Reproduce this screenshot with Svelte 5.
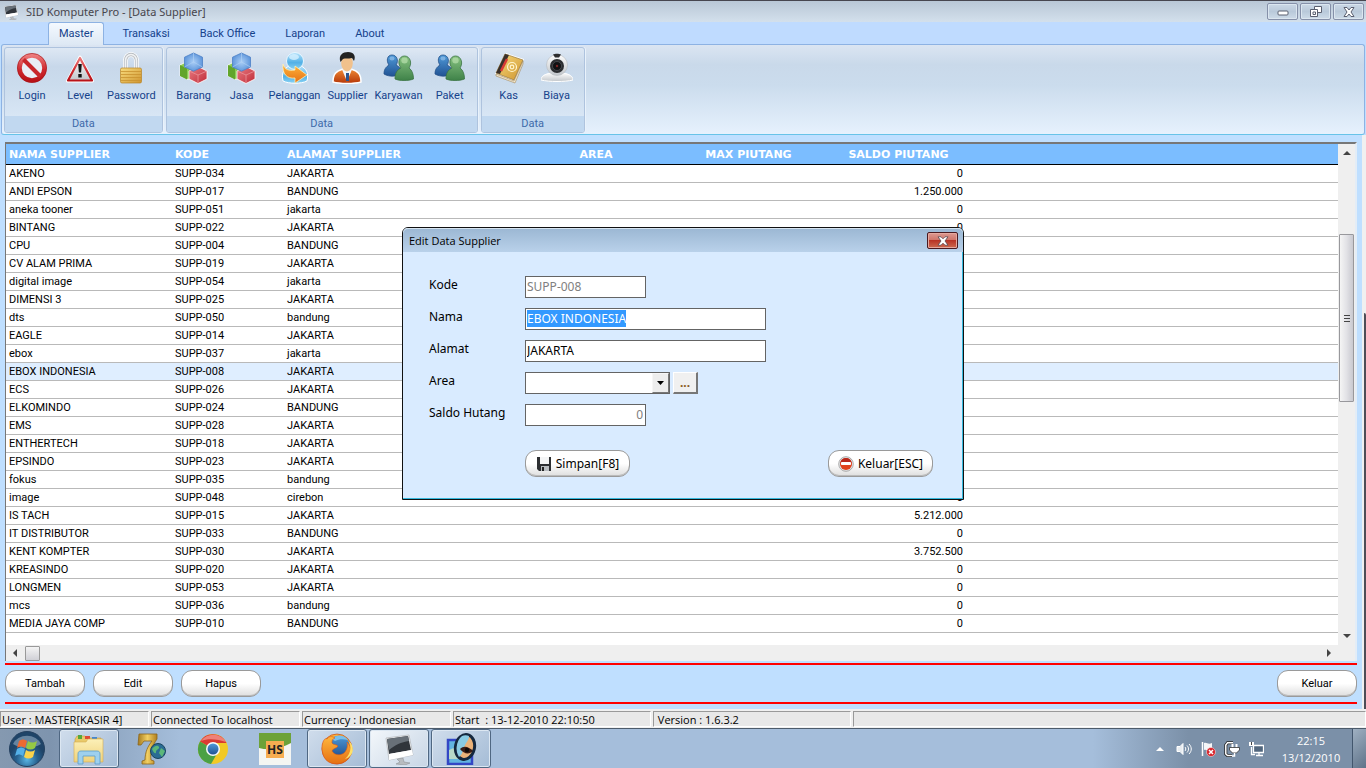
<script lang="ts">
  import { onMount } from "svelte";

  interface Supplier {
    name: string;
    code: string;
    address: string;
    balance: string;
  }

  const tabs = ["Master", "Transaksi", "Back Office", "Laporan", "About"];

  const groups = [
    [
      { label: "Login", icon: "login" },
      { label: "Level", icon: "level" },
      { label: "Password", icon: "lock" },
    ],
    [
      { label: "Barang", icon: "cubes" },
      { label: "Jasa", icon: "cubes" },
      { label: "Pelanggan", icon: "customer" },
      { label: "Supplier", icon: "supplier" },
      { label: "Karyawan", icon: "people" },
      { label: "Paket", icon: "people" },
    ],
    [
      { label: "Kas", icon: "book" },
      { label: "Biaya", icon: "camera" },
    ],
  ];

  const rows: [string, string, string, string][] = [
    ["AKENO", "034", "JAKARTA", "0"],
    ["ANDI EPSON", "017", "BANDUNG", "1.250.000"],
    ["aneka tooner", "051", "jakarta", "0"],
    ["BINTANG", "022", "JAKARTA", "0"],
    ["CPU", "004", "BANDUNG", "0"],
    ["CV ALAM PRIMA", "019", "JAKARTA", "0"],
    ["digital image", "054", "jakarta", "0"],
    ["DIMENSI 3", "025", "JAKARTA", "0"],
    ["dts", "050", "bandung", "0"],
    ["EAGLE", "014", "JAKARTA", "0"],
    ["ebox", "037", "jakarta", "0"],
    ["EBOX INDONESIA", "008", "JAKARTA", "0"],
    ["ECS", "026", "JAKARTA", "0"],
    ["ELKOMINDO", "024", "BANDUNG", "0"],
    ["EMS", "028", "JAKARTA", "0"],
    ["ENTHERTECH", "018", "JAKARTA", "0"],
    ["EPSINDO", "023", "JAKARTA", "0"],
    ["fokus", "035", "bandung", "0"],
    ["image", "048", "cirebon", "0"],
    ["IS TACH", "015", "JAKARTA", "5.212.000"],
    ["IT DISTRIBUTOR", "033", "BANDUNG", "0"],
    ["KENT KOMPTER", "030", "JAKARTA", "3.752.500"],
    ["KREASINDO", "020", "JAKARTA", "0"],
    ["LONGMEN", "053", "JAKARTA", "0"],
    ["mcs", "036", "bandung", "0"],
    ["MEDIA JAYA COMP", "010", "BANDUNG", "0"],
  ];

  const suppliers: Supplier[] = rows.map(([name, no, address, balance]) => ({
    name,
    code: "SUPP-" + no,
    address,
    balance,
  }));

  const tasks = [
    { name: "Explorer", icon: "explorer", open: true },
    { name: "Seven", icon: "seven", open: false },
    { name: "Chrome", icon: "chrome", open: false },
    { name: "HS", icon: "hs", open: false },
    { name: "Firefox", icon: "firefox", open: true },
    { name: "SID Komputer Pro", icon: "monitor", open: true, active: true },
    { name: "Viewer", icon: "viewer", open: true },
  ];

  let activeTab = $state("Master");
  let selected = $state("SUPP-008");
  let dialogOpen = $state(true);
  let kode = $state("SUPP-008");
  let nama = $state("EBOX INDONESIA");
  let alamat = $state("JAKARTA");
  let saldo = $state("0");
  let namaInput: HTMLInputElement | undefined = $state();

  function edit(): void {
    const s = suppliers.find((x) => x.code === selected);
    if (!s) return;
    kode = s.code;
    nama = s.name;
    alamat = s.address;
    saldo = s.balance;
    dialogOpen = true;
  }

  onMount(() => {
    namaInput?.focus();
    namaInput?.select();
  });
</script>

{#snippet monitor(size: number)}
  <svg width={size} height={size} viewBox="0 0 32 32">
    <path d="M14 26l6-1 1 4 6 1-5 2-9-1 4-2z" fill="#b9bcc0" stroke="#85888c" stroke-width=".5" />
    <path d="M3 5l23-3 4 20-24 5z" fill="#f4f5f6" stroke="#a5a8ab" stroke-width=".6" />
    <path d="M4 6l21-3 3 14-22 4z" fill="#30353b" />
    <path d="M4 6l21-3 1 5c-8 1-14 4-20 9z" fill="#687078" />
    <path d="M6 21l23-4 1 5-24 5z" fill="#fff" />
  </svg>
{/snippet}

{#snippet icon(name: string)}
  <svg class="icon" width="32" height="32" viewBox="0 0 32 32" aria-hidden="true">
    {#if name === "login"}
      <circle cx="16" cy="16" r="12.5" fill="#e9eef6" stroke="url(#gRed)" stroke-width="4.6" />
      <path d="M7.5 7.5l17 17" stroke="#c8262b" stroke-width="4" />
      <circle cx="16" cy="16" r="14.6" fill="none" stroke="#9e1519" stroke-width=".6" />
    {:else if name === "level"}
      <path d="M16 5L28.500 29H3.500z" fill="#fff" stroke="#fff" stroke-width="3" stroke-linejoin="round" />
      <path d="M16 6L28 28.500H4z" fill="url(#gSilver)" stroke="url(#gRed)" stroke-width="2.200" stroke-linejoin="round" />
      <path d="M14.200 12h3.600l-.7 8.500h-2.200z" fill="#111" />
      <rect x="14.300" y="22" width="3.400" height="3.500" fill="#111" />
    {:else if name === "lock"}
      <path d="M10.500 17V8.500a5.500 6 0 0 1 11 0V17" fill="none" stroke="#fff" stroke-width="5" />
      <path d="M10.500 17V8.500a5.500 6 0 0 1 11 0V17" fill="none" stroke="#b9bec3" stroke-width="3.400" />
      <path d="M10.500 17V8.500a5.500 6 0 0 1 11 0V17" fill="none" stroke="#f1f2f3" stroke-width="1.600" />
      <rect x="5.500" y="16" width="21" height="15" rx="1.500" fill="url(#gGold)" stroke="#b98422" stroke-width=".7" />
      <path d="M6 19.500h20M6 22.500h20M6 25.500h20M6 28.500h20" stroke="#c9922e" stroke-width=".8" />
    {:else if name === "cubes"}
      <path d="M2 13l7-3.500 8 4V24l-7 3.500L2 24z" fill="#8ecb53" stroke="#fff" stroke-width=".8" />
      <path d="M2 13l7 3.500v11L2 24z" fill="#62a52b" />
      <path d="M11 19l9-4.500 9 4.500v8l-9 4.500-9-4.500z" fill="url(#gRed2)" stroke="#fff" stroke-width=".8" />
      <path d="M11 19l9 4 9-4M20 23v8" stroke="#ee9ba0" stroke-width=".7" fill="none" />
      <path d="M15.500 1l9 4.200v9.800l-9 4.200-9-4.200V5.200z" fill="url(#gCube)" stroke="#4d80c6" stroke-width=".8" />
      <path d="M6.500 15l9-5 9 5M15.500 10V1" stroke="#b4d4f5" stroke-width=".6" fill="none" />
    {:else if name === "customer"}
      <path d="M4 29c-2-9 2-13 6-15h12c5 2 8 7 6 15-6 3-18 3-24 0z" fill="url(#gSky)" stroke="#fff" />
      <circle cx="16" cy="9" r="8.500" fill="url(#gSky)" stroke="#e8f6ff" />
      <ellipse cx="15" cy="5" rx="5" ry="3" fill="#d6f0ff" opacity=".8" />
      <path d="M4 12c2 6 6 7 12 6v-4l12 9-12 8v-5c-8 1-13-4-12-14z" fill="url(#gOrange)" stroke="#fff0b5" stroke-width=".8" />
    {:else if name === "supplier"}
      <path d="M2 30c0-8 3-11 10-13h8c7 2 10 5 10 13-7 2-21 2-28 0z" fill="url(#gShirt)" stroke="#fff" stroke-width="1.500" />
      <path d="M11 17.500l5 12 5-12-2-2h-6z" fill="#f3f7fb" />
      <path d="M15 21h3v8h-3z" fill="#2b5590" />
      <ellipse cx="16" cy="11" rx="5.800" ry="8.500" fill="#f1c18c" />
      <path d="M9.500 10C7 3 12 0 17 0c6 0 8 4 6 9l-2-3c-4 1-7 0-9 1z" fill="#222" />
    {:else if name === "people"}
      <path d="M1 22c0-5 2-7 5-9C3 9 4 3 9 3s7 6 4 10c4 2 5 4 5 8-4 4-12 4-17 1z" fill="url(#gBlue)" stroke="#234f88" stroke-width=".8" />
      <path d="M12 27c0-6 2-9 6-11-4-5-2-12 3.500-12s8 7 4.500 12c3 2 4.500 6 4.500 11-5 2-14 2-18.500 0z" fill="url(#gGreen)" stroke="#3a7443" stroke-width=".8" />
      <ellipse cx="21.500" cy="8.500" rx="3.200" ry="3" fill="#b8dfae" opacity=".7" />
      <ellipse cx="9" cy="6.500" rx="2.500" ry="2" fill="#a1c8ee" opacity=".6" />
    {:else if name === "book"}
      <path d="M13 1l18 6-9 24L2 22z" fill="#fff" />
      <path d="M12 2l18 6-9 20-18-7z" fill="url(#gGold)" stroke="#8a6a2e" stroke-width=".6" />
      <path d="M12 2l4 1-9 19-4-1z" fill="#39302b" />
      <path d="M14 7l-6 12" stroke="#d83a35" stroke-width="2.500" />
      <path d="M3 22l18 7 9-20v3l-8 19-19-7z" fill="#f3e8cf" stroke="#937443" stroke-width=".5" />
      <circle cx="19" cy="15" r="4.500" fill="none" stroke="#fff4cc" stroke-width="1.200" />
      <circle cx="19" cy="15" r="1.800" fill="none" stroke="#fff4cc" stroke-width="1.200" />
    {:else if name === "camera"}
      <path d="M0 28c0-4 4-6 10-7h12c6 1 10 3 10 7-8 2-24 2-32 0z" fill="url(#gSilver)" stroke="#fff" />
      <circle cx="16" cy="13" r="10.500" fill="url(#gSilver)" stroke="#b5babf" stroke-width=".6" />
      <path d="M12 2.500c2-1 6-1 8 0l-2 3h-4z" fill="#2d2d2f" />
      <circle cx="16" cy="14" r="7" fill="#2b2d30" />
      <circle cx="16" cy="14" r="4.500" fill="#101113" stroke="#55585c" stroke-width=".7" />
      <circle cx="16" cy="14" r="1.200" fill="#7a2323" />
    {:else if name === "explorer"}
      <path d="M2 6l2-3h8l2 2h14v8H2z" fill="#e9c969" stroke="#b8923b" stroke-width=".5" />
      <path d="M5 2h4v4H5z" fill="#56a83b" />
      <path d="M12 3h5v3h-5z" fill="#de4b36" />
      <path d="M19 4h5v3h-5z" fill="#4386cf" />
      <path d="M1 9h12l2-3h15v23H1z" fill="url(#gFolder)" stroke="#d3ab53" stroke-width=".6" />
      <path d="M5 31V21c0-2 1-3 3-3h16c2 0 3 1 3 3v10h-5v-8H10v8z" fill="#9ed0ee" stroke="#5b9cc8" stroke-width=".8" />
    {:else if name === "seven"}
      <path d="M4 1h18v5c-5 7-7 14-6 21l3 1v3H7v-3l3-1c0-8 3-14 7-19H9l-3 4H3z" fill="url(#gBrass)" stroke="#8d661a" stroke-width=".8" />
      <circle cx="23" cy="18" r="7.500" fill="#2a6c94" stroke="#19445f" />
      <path d="M17 16c3-4 6-4 7-2s-3 2-3 5-3 0-4-3zm9-1l4 3-3 6-3-4z" fill="#5cb779" />
    {:else if name === "chrome"}
      <circle cx="16" cy="16" r="15" fill="#f2c925" />
      <path d="M16 16L3 8.500A15 15 0 0 1 29.500 10H16z" fill="#d93b32" />
      <path d="M16 16L3 8.500A15 15 0 0 0 14 31l7-12z" fill="#4ba144" />
      <path d="M4 8a15 15 0 0 1 25 1c-8-3-18-4-25-1z" fill="#ef8177" />
      <circle cx="16" cy="16" r="7" fill="#f7fafc" />
      <circle cx="16" cy="16" r="5.500" fill="url(#gBlue)" />
    {:else if name === "hs"}
      <path d="M0 0h32v16H0z" fill="#6da238" />
      <path d="M0 15c11 3 23 0 32-5v22H0z" fill="#f4f5f2" />
      <rect x="7" y="8" width="18" height="17" fill="#f7ad51" />
      <text x="16" y="21" text-anchor="middle" class="hs">HS</text>
    {:else if name === "firefox"}
      <circle cx="16" cy="16" r="15" fill="url(#gOrange)" stroke="#c34816" stroke-width=".7" />
      <circle cx="18" cy="13" r="10.500" fill="url(#gBlue)" />
      <path d="M11 6c4-5 13-4 16 1-5-1-9-1-13 1z" fill="#79c0ec" />
      <path d="M2 9c1-3 3-4 4-3 2-3 5-3 8-1-3 1-3 3-3 5 1 2 4 1 6 3-2 3-5 2-6 5 2 4 8 5 12 2 3-3 4-7 3-11 5 5 5 13 0 18-7 6-19 5-23-3-2-5-3-10-1-15z" fill="url(#gOrange)" stroke="#d7581a" stroke-width=".6" />
      <path d="M28 8c3 7 1 14-4 18 9-3 10-12 4-18z" fill="#ffe26a" />
    {:else if name === "viewer"}
      <rect x="3" y="7" width="24" height="24" fill="#62b5e1" stroke="#3347c5" stroke-width="2.500" />
      <path d="M4 17l7-3 4 5 10-4v11H4z" fill="#b7d9c8" />
      <ellipse cx="20" cy="14" rx="9.500" ry="12.500" fill="#eab279" stroke="#14283f" stroke-width="3" transform="rotate(12 20 14)" />
      <path d="M17 3c-6 5-7 15-3 21 4-3 4-8 6-12s4-5 4-9c-2-1-5-1-7 0z" fill="#89cbe4" />
      <path d="M15 16c4-4 9-2 13 2-4 4-9 3-13-2z" fill="#3a1d16" />
      <circle cx="22" cy="17" r="2.200" fill="#0e0b0b" />
    {/if}
  </svg>
{/snippet}

<svg class="defs" width="0" height="0" aria-hidden="true">
  <defs>
    <linearGradient id="gRed" x2="0" y2="1"><stop stop-color="#ec7a7b" /><stop offset=".55" stop-color="#cf2a2f" /><stop offset="1" stop-color="#ba1218" /></linearGradient>
    <linearGradient id="gRed2" x2="1" y2="1"><stop stop-color="#ea7d83" /><stop offset="1" stop-color="#bf2b38" /></linearGradient>
    <linearGradient id="gSilver" x2="0" y2="1"><stop stop-color="#fdfdfd" /><stop offset="1" stop-color="#c2c6ca" /></linearGradient>
    <linearGradient id="gGold" x2="1" y2="1"><stop stop-color="#f8dc7e" /><stop offset="1" stop-color="#cf9530" /></linearGradient>
    <linearGradient id="gBrass" x2="1" y2="0"><stop stop-color="#a57a1e" /><stop offset=".5" stop-color="#f2cf62" /><stop offset="1" stop-color="#b1801f" /></linearGradient>
    <radialGradient id="gCube"><stop stop-color="#a9cdf5" /><stop offset="1" stop-color="#6198dc" /></radialGradient>
    <linearGradient id="gSky" x2="0" y2="1"><stop stop-color="#b7e3fb" /><stop offset=".6" stop-color="#52b0e6" /><stop offset="1" stop-color="#8bd3f4" /></linearGradient>
    <linearGradient id="gOrange" x2="0" y2="1"><stop stop-color="#ffb63c" /><stop offset="1" stop-color="#e57013" /></linearGradient>
    <linearGradient id="gShirt" x2="0" y2="1"><stop stop-color="#ef8a35" /><stop offset="1" stop-color="#b53608" /></linearGradient>
    <linearGradient id="gBlue" x2="0" y2="1"><stop stop-color="#4f9ad8" /><stop offset="1" stop-color="#215394" /></linearGradient>
    <linearGradient id="gGreen" x2="0" y2="1"><stop stop-color="#86c180" /><stop offset="1" stop-color="#3f8249" /></linearGradient>
    <linearGradient id="gFolder" x2="0" y2="1"><stop stop-color="#fbf0b8" /><stop offset="1" stop-color="#f0d27b" /></linearGradient>
    <radialGradient id="gOrb" cy=".8"><stop stop-color="#58b5e4" /><stop offset=".6" stop-color="#27618f" /><stop offset="1" stop-color="#1f4468" /></radialGradient>
  </defs>
</svg>

<div class="window">
  <header class="titlebar">
    {@render monitor(16)}
    <h1>SID Komputer Pro - [Data Supplier]</h1>
    <div class="win-buttons">
      <button aria-label="Minimize">
        <svg width="16" height="12" viewBox="0 0 16 12"><rect x="3" y="5" width="10" height="4" rx="1" fill="#fff" stroke="#5b6070" /></svg>
      </button>
      <button aria-label="Restore">
        <svg width="16" height="12" viewBox="0 0 16 12" fill="#fff" stroke="#5b6070">
          <path d="M6.500 .5h7v6h-7z" />
          <path d="M2.500 3.500h7v7h-7z" />
          <path d="M5 6h2.500v2.500H5z" />
        </svg>
      </button>
      <button aria-label="Close">
        <svg width="16" height="12" viewBox="0 0 16 12"><path d="M3 1.500h3l2 2.500 2-2.500h3L10 6l3 4.500h-3L8 8l-2 2.500H3L6 6z" fill="#fff" stroke="#5b6070" /></svg>
      </button>
    </div>
  </header>

  <nav class="tabs">
    {#each tabs as tab}
      <button class:active={tab === activeTab} onclick={() => (activeTab = tab)}>{tab}</button>
    {/each}
  </nav>

  <div class="ribbon">
    {#each groups as items}
      <section class="group">
        <div class="items">
          {#each items as item}
            <button>
              {@render icon(item.icon)}
              <span>{item.label}</span>
            </button>
          {/each}
        </div>
        <div class="caption">Data</div>
      </section>
    {/each}
  </div>

  <div class="client">
    <main>
      <div class="grid">
        <div class="grid-body">
          <table>
            <colgroup>
              <col class="c-name" /><col class="c-code" /><col class="c-address" />
              <col class="c-area" /><col class="c-max" /><col class="c-saldo" /><col />
            </colgroup>
            <thead>
              <tr>
                <th>NAMA SUPPLIER</th>
                <th>KODE</th>
                <th>ALAMAT SUPPLIER</th>
                <th class="center">AREA</th>
                <th class="center">MAX PIUTANG</th>
                <th class="center">SALDO PIUTANG</th>
                <th></th>
              </tr>
            </thead>
            <tbody>
              {#each suppliers as s}
                <tr class:selected={s.code === selected} onclick={() => (selected = s.code)}>
                  <td>{s.name}</td>
                  <td>{s.code}</td>
                  <td>{s.address}</td>
                  <td></td>
                  <td></td>
                  <td class="num">{s.balance}</td>
                  <td></td>
                </tr>
              {/each}
            </tbody>
          </table>
        </div>
        <div class="vscroll">
          <button aria-label="Scroll up"><svg width="8" height="4" viewBox="0 0 8 4"><path d="M4 0l4 4H0z" fill="#444" /></svg></button>
          <div class="vtrack">
            <div class="vthumb"><i></i><i></i><i></i></div>
          </div>
          <button aria-label="Scroll down"><svg width="8" height="4" viewBox="0 0 8 4"><path d="M0 0h8L4 4z" fill="#444" /></svg></button>
        </div>
        <div class="hscroll">
          <button aria-label="Scroll left"><svg width="4" height="8" viewBox="0 0 4 8"><path d="M4 0v8L0 4z" fill="#444" /></svg></button>
          <div class="hthumb"></div>
          <button class="end" aria-label="Scroll right"><svg width="4" height="8" viewBox="0 0 4 8"><path d="M0 0l4 4-4 4z" fill="#444" /></svg></button>
        </div>
        <div class="corner"></div>
      </div>

      <div class="actions">
        <button class="pill">Tambah</button>
        <button class="pill" onclick={edit}>Edit</button>
        <button class="pill">Hapus</button>
        <button class="pill last">Keluar</button>
      </div>
    </main>
    <div class="edge"><div></div></div>
  </div>

  <footer class="status">
    <span class="s-user">User : MASTER[KASIR 4]</span>
    <span class="s-user">Connected To localhost</span>
    <span class="s-user">Currency : Indonesian</span>
    <span class="s-wide">Start &nbsp;: 13-12-2010 22:10:50</span>
    <span class="s-wide">&nbsp;Version : 1.6.3.2</span>
    <span class="s-rest"></span>
  </footer>

  <div class="taskbar">
    <button class="start" aria-label="Start">
      <svg width="38" height="38" viewBox="0 0 38 38">
        <circle cx="19" cy="19" r="17.500" fill="url(#gOrb)" stroke="#24405f" />
        <path d="M5 14a15 13 0 0 1 28 0c-8 5-20 5-28 0z" fill="#bcd3e4" opacity=".45" />
        <path d="M11 11c3-2 5-2 8 0l-2 7c-3-2-5-2-8 0z" fill="#ec6a32" />
        <path d="M20 11c3 2 6 2 9 0l-2 7c-3 2-6 2-9 0z" fill="#95c944" />
        <path d="M9 19c3-2 5-2 8 0l-2 7c-3-2-5-2-8 0z" fill="#55b1e8" />
        <path d="M18 20c3 2 6 2 9 0l-2 7c-3 2-6 2-9 0z" fill="#fbd34b" />
      </svg>
    </button>
    {#each tasks as task}
      <button class="task" class:open={task.open} class:current={task.active} aria-label={task.name}>
        {#if task.icon === "monitor"}
          {@render monitor(32)}
        {:else}
          {@render icon(task.icon)}
        {/if}
      </button>
    {/each}

    <div class="tray">
      <svg class="chevron" width="8" height="4" viewBox="0 0 8 4"><path d="M4 0l4 4H0z" fill="#fff" /></svg>
      <svg width="16" height="16" viewBox="0 0 16 16" fill="none" stroke="#fff">
        <path d="M1 5.500h3l3-3v11l-3-3H1z" fill="#e8ecf0" />
        <path d="M9 6c1 1 1 3 0 4M11 4.500c2 2 2 5 0 7M13 3c3 3 3 7 0 10" />
      </svg>
      <svg width="16" height="16" viewBox="0 0 16 16">
        <path d="M2.500 1v14" stroke="#fff" stroke-width="1.500" />
        <path d="M4 2c3-1 4 2 8 0v7c-4 2-5-1-8 0z" fill="#f5f6f8" />
        <circle cx="11" cy="11" r="4.500" fill="#d8232a" stroke="#fff" stroke-width=".5" />
        <path d="M9 9l4 4m0-4l-4 4" stroke="#fff" stroke-width="1.500" />
      </svg>
      <svg width="16" height="16" viewBox="0 0 16 16" fill="none" stroke="#fff" stroke-width="1.500">
        <path d="M9 1.800H3.500L1.800 4v9l1.700 1.500H8" stroke="#222" stroke-width="3" />
        <path d="M9 1.800H3.500L1.800 4v9l1.700 1.500H8" />
        <path d="M8.500 3v4m4-4v4" stroke-width="2" />
        <path d="M5.500 6.500h10V9l-3 3h-4l-3-3z" fill="#fff" stroke="#333" stroke-width=".8" />
        <path d="M10.500 12v3H8" />
      </svg>
      <svg width="16" height="16" viewBox="0 0 16 16">
        <path d="M5.500 4.500h10v7h-10z" fill="#52677e" stroke="#fff" stroke-width="1.300" />
        <path d="M8 14.500h7M11 12v2M3.500 6v7.500H7" stroke="#fff" stroke-width="1.300" fill="none" />
        <path d="M1 1h5v4H1z" fill="#fff" />
        <path d="M3.500 1v3" stroke="#444" />
      </svg>
    </div>
    <div class="clock"><span>22:15</span><span>13/12/2010</span></div>
    <button class="show-desktop" aria-label="Show desktop"></button>
  </div>

  {#if dialogOpen}
    <div class="dialog" role="dialog" aria-labelledby="dialog-title">
      <div class="dialog-title">
        <h2 id="dialog-title">Edit Data Supplier</h2>
        <button aria-label="Close" onclick={() => (dialogOpen = false)}>
          <svg width="14" height="10" viewBox="0 0 14 10"><path d="M2 .8h3l2 2 2-2h3L9 5l3 4.200H9l-2-2-2 2H2L5 5z" fill="#fff" stroke="#59464e" stroke-width=".8" /></svg>
        </button>
      </div>
      <form onsubmit={(e) => e.preventDefault()}>
        <label for="kode">Kode</label>
        <div><input id="kode" class="short" bind:value={kode} disabled /></div>
        <label for="nama">Nama</label>
        <div><input id="nama" bind:value={nama} bind:this={namaInput} spellcheck="false" autocomplete="off" /></div>
        <label for="alamat">Alamat</label>
        <div><input id="alamat" bind:value={alamat} spellcheck="false" autocomplete="off" /></div>
        <label for="area">Area</label>
        <div class="area">
          <div class="combo">
            <select id="area"><option></option></select>
            <span class="arrow"><svg width="7" height="4" viewBox="0 0 7 4"><path d="M0 0h7L3.500 4z" /></svg></span>
          </div>
          <button class="more" type="button">...</button>
        </div>
        <label for="saldo">Saldo Hutang</label>
        <div><input id="saldo" class="short right" bind:value={saldo} disabled /></div>
        <div class="form-buttons">
          <button class="pill" type="submit">
            <svg width="16" height="16" viewBox="0 0 16 16">
              <path d="M1 1h14v14H3l-2-2z" fill="#2c2e31" />
              <path d="M4 1h9v7H4z" fill="#f4f5f6" />
              <path d="M5 10h8v5H5z" fill="#b8bcc0" />
              <path d="M6 11h2v4H6z" fill="#222" />
            </svg>
            Simpan[F8]
          </button>
          <button class="pill" type="button" onclick={() => (dialogOpen = false)}>
            <svg width="16" height="16" viewBox="0 0 16 16">
              <circle cx="8" cy="8" r="7.300" fill="#e6e7e8" stroke="#999" stroke-width=".8" />
              <circle cx="8" cy="8" r="6" fill="#e0421c" />
              <path d="M2.500 7a5.500 5 0 0 1 11 0z" fill="#b8281c" />
              <rect x="3" y="6" width="10" height="3" rx=".8" fill="#fff" />
            </svg>
            Keluar[ESC]
          </button>
        </div>
      </form>
    </div>
  {/if}
</div>

<style>
  :global(body) {
    margin: 0;
    background: #bfdfff;
  }

  .window {
    position: relative;
    min-height: 100vh;
    display: flex;
    flex-direction: column;
    font: 11px/14px Roboto, "Liberation Sans", sans-serif;
    color: #000;
  }

  .defs {
    position: absolute;
  }

  svg {
    display: block;
    flex: none;
  }

  button {
    font: inherit;
    color: inherit;
    margin: 0;
    padding: 0;
    border: 0;
    background: none;
  }

  .titlebar {
    display: flex;
    align-items: center;
    height: 22px;
    box-sizing: border-box;
    padding-left: 3px;
    gap: 7px;
    border-top: 1px solid #47464f;
    background: linear-gradient(#b9c7d6, #d3e0ec);
  }

  h1,
  h2 {
    margin: 0;
    font: 11px/16px "Open Sans", "Noto Sans", sans-serif;
  }

  h1 {
    color: #47454c;
    font-family: "Noto Sans", sans-serif;
  }

  .win-buttons {
    display: flex;
    gap: 2px;
    margin-left: auto;
    padding-right: 2px;
  }

  .win-buttons button {
    width: 31px;
    height: 17px;
    display: grid;
    place-items: center;
    border: 1px solid #8590a9;
    border-radius: 2px;
    background: linear-gradient(#cbd8e6, #b9c9da 50%, #cddbe8);
    box-shadow: inset 0 0 0 1px #dbe6f0;
  }

  .tabs {
    display: flex;
    height: 22px;
    padding-left: 48px;
    background: #bfdbff;
    color: #15428b;
  }

  .tabs button {
    height: 23px;
    padding: 0 14px;
    line-height: 22px;
    border: 1px solid transparent;
    border-bottom: 0;
  }

  .tabs .active {
    padding: 0 10px;
    margin-right: 3px;
    border-color: #8db2e3;
    border-radius: 3px 3px 0 0;
    background: linear-gradient(#f4f9ff, #dde8f4);
    position: relative;
    z-index: 1;
  }

  .ribbon {
    display: flex;
    gap: 3px;
    height: 91px;
    box-sizing: border-box;
    margin: 0 1px;
    padding: 2px 2px 1px;
    border: 1px solid #8db2e3;
    border-bottom-color: #67c3e8;
    border-radius: 3px;
    background: linear-gradient(#dbe5f2, #c9d9ea 22%, #cbdced 45%, #e6f1fd);
  }

  .group {
    display: flex;
    flex-direction: column;
    border: 1px solid #aec3de;
    border-radius: 3px;
    overflow: hidden;
    background: linear-gradient(#dee8f4, #c8d8ea 22%, #cbdced 45%, #dfebf9);
    box-shadow: 1px 0 0 #e9f2fb;
  }

  .items {
    display: flex;
    flex: 1;
    padding: 4px 3px 0;
    color: #15428b;
  }

  .items button {
    display: flex;
    flex-direction: column;
    align-items: center;
    gap: 5px;
    min-width: 48px;
    padding: 0 3px;
    box-sizing: border-box;
  }

  .caption {
    height: 16px;
    line-height: 16px;
    text-align: center;
    background: #c1d8f0;
    color: #3e6aaa;
  }

  .client {
    flex: 1;
    display: flex;
    background: #bfdfff;
  }

  main {
    flex: 1;
    min-width: 0;
    display: flex;
    flex-direction: column;
    padding: 7px 5px 5px;
  }

  .edge {
    width: 4px;
    background: #f0f0f0;
    display: flex;
    flex-direction: column;
    justify-content: flex-end;
    align-items: flex-end;
  }

  .edge div {
    width: 2px;
    height: 69%;
    background: #4d4d57;
    border-top-right-radius: 2px;
  }

  .grid {
    flex: 1;
    display: grid;
    grid-template-columns: 1fr 17px;
    grid-template-rows: 1fr 16px;
    border: 1px solid #777;
    border-top-width: 2px;
    border-right: 2px solid #e3edf7;
    border-bottom: 0;
    background: #fff;
  }

  table {
    width: 100%;
    table-layout: fixed;
    border-collapse: collapse;
  }

  .c-name {
    width: 166px;
  }

  .c-code {
    width: 112px;
  }

  .c-address {
    width: 242px;
  }

  .c-area {
    width: 140px;
  }

  .c-max {
    width: 165px;
  }

  .c-saldo {
    width: 135px;
  }

  th {
    height: 18px;
    padding: 2px 3px 0;
    text-align: left;
    font: bold 11px/18px "DejaVu Sans", sans-serif;
    color: #fff;
    background: #7bbdff;
    border-bottom: 1px solid #000;
    white-space: nowrap;
  }

  th.center {
    text-align: center;
  }

  td {
    height: 17px;
    padding: 0 3px;
    line-height: 17px;
    white-space: nowrap;
    border-bottom: 1px solid #b9b9b9;
  }

  td.num {
    text-align: right;
  }

  .selected td {
    background: #dfeeff;
  }

  .vscroll,
  .hscroll,
  .corner {
    background: #efefef;
  }

  .vscroll {
    display: flex;
    flex-direction: column;
  }

  .vscroll button {
    height: 18px;
    display: grid;
    place-items: center;
  }

  .vtrack {
    flex: 1;
    padding-top: 72px;
  }

  .vthumb {
    height: 168px;
    width: 15px;
    box-sizing: border-box;
    margin: 0 auto;
    display: flex;
    flex-direction: column;
    justify-content: center;
    align-items: center;
    gap: 2px;
    border: 1px solid #98989c;
    border-radius: 1px;
    background: linear-gradient(90deg, #f5f5f5, #e2e2e6 50%, #c9c9d0);
  }

  .vthumb i {
    width: 6px;
    height: 1px;
    background: #444;
  }

  .hscroll {
    display: flex;
    align-items: center;
  }

  .hscroll button {
    width: 18px;
    height: 16px;
    display: grid;
    place-items: center;
  }

  .hthumb {
    width: 13px;
    height: 13px;
    margin-left: 1px;
    border: 1px solid #999;
    border-radius: 1px;
    background: linear-gradient(#f4f4f4, #d0d0d6);
  }

  .hscroll .end {
    margin-left: auto;
  }

  .actions {
    display: flex;
    gap: 8px;
    margin-top: 2px;
    padding: 5px 0;
    border: solid #f00;
    border-width: 2px 0;
  }

  .pill {
    width: 80px;
    height: 27px;
    display: flex;
    align-items: center;
    justify-content: center;
    gap: 4px;
    box-sizing: border-box;
    border: 1px solid #9a9a9a;
    border-radius: 11px;
    background: linear-gradient(#fff 50%, #dedede);
    box-shadow: inset 0 -1px 0 #bbb;
  }

  .last {
    margin-left: auto;
  }

  .status {
    display: flex;
    gap: 2px;
    padding: 2px 0 1px;
    background: #f0f0f0;
    font: 11px/15px "Open Sans", "Noto Sans", sans-serif;
    white-space: pre;
  }

  .status span {
    box-sizing: border-box;
    height: 16px;
    padding-left: 1px;
    border: 1px solid #fff;
    border-top-color: #999;
    border-left-color: #999;
    background: #e8e8e8;
  }

  .s-user {
    width: 149px;
  }

  .s-wide {
    width: 198px;
  }

  .s-rest {
    flex: 1;
  }

  .taskbar {
    display: flex;
    height: 40px;
    gap: 2px;
    box-sizing: border-box;
    border-top: 1px solid #4c5b6b;
    background: linear-gradient(90deg, #8599b0, #7e94ae 50px, #a5bedb 180px, #a5bedb 80%, #7b90a8 87%, #7b90a8);
  }

  .start {
    width: 57px;
    padding-left: 8px;
  }

  .task {
    width: 60px;
    display: grid;
    place-items: center;
    border: 1px solid transparent;
    border-radius: 3px;
  }

  .task.open {
    border-color: #4f6782;
    background: linear-gradient(135deg, #d0ddec, #a5bcd6);
    box-shadow: inset 0 0 0 1px #dce7f2;
  }

  .task.current {
    background: linear-gradient(135deg, #f3f7fb, #c7d5e5);
  }

  .hs {
    font: bold 12px "Open Sans", sans-serif;
    fill: #222;
  }

  .tray {
    display: flex;
    align-items: center;
    gap: 8px;
    margin-left: auto;
  }

  .chevron {
    margin-right: 4px;
  }

  .clock {
    width: 84px;
    padding-left: 6px;
    box-sizing: border-box;
    display: flex;
    flex-direction: column;
    justify-content: center;
    text-align: center;
    font: 11px/17px "Open Sans", "Noto Sans", sans-serif;
    color: #fff;
  }

  .show-desktop {
    width: 14px;
    box-sizing: border-box;
    border-left: 1px solid #42566d;
    background: linear-gradient(135deg, #9fb0c2, #5f7389);
  }

  .dialog {
    position: absolute;
    top: 227px;
    left: 0;
    right: 0;
    width: 562px;
    margin: 0 auto;
    box-sizing: border-box;
    border: 1px solid #111;
    border-radius: 6px 6px 0 0;
    background: #d9ebff;
    box-shadow: inset -1px -1px 0 #35b8dc;
    font: 12px/16px "Noto Sans", sans-serif;
  }

  .dialog-title {
    display: flex;
    justify-content: space-between;
    align-items: center;
    height: 24px;
    padding: 1px 5px 0 6px;
    box-sizing: border-box;
    border-radius: 5px 5px 0 0;
    background: linear-gradient(#9bb7d3, #b9d1ea);
    box-shadow: inset 0 1px 0 #d6e4f0;
  }

  .dialog-title button {
    width: 31px;
    height: 17px;
    display: grid;
    place-items: center;
    border: 1px solid #4a1a20;
    border-radius: 2px;
    background: linear-gradient(#dd9a92, #cf7468 48%, #b83426 50%, #cd6a50);
    box-shadow: inset 0 0 0 1px #e5a89e;
  }

  form {
    display: grid;
    grid-template-columns: 96px 1fr;
    row-gap: 10px;
    padding: 24px 30px 22px 26px;
  }

  label {
    padding-top: 1px;
  }

  input,
  select {
    display: block;
    width: 241px;
    height: 22px;
    box-sizing: border-box;
    margin: 0;
    padding: 0 2px 2px 1px;
    border: 1px solid #646464;
    border-radius: 0;
    outline: 0;
    background: #fff;
    color: #000;
    font: inherit;
  }

  input:disabled {
    color: #808080;
  }

  input::selection {
    background: #3399ff;
    color: #fff;
  }

  .short {
    width: 121px;
  }

  .right {
    text-align: right;
  }

  .area {
    display: flex;
    gap: 3px;
  }

  .combo {
    position: relative;
    width: 145px;
  }

  select {
    width: 100%;
    appearance: none;
  }

  .arrow {
    position: absolute;
    top: 1px;
    right: 1px;
    width: 15px;
    height: 18px;
    display: grid;
    place-items: center;
    border: 1px solid #f6f6f6;
    border-right-color: #777;
    border-bottom-color: #777;
    background: #ededed;
    pointer-events: none;
  }

  .more {
    width: 25px;
    height: 22px;
    border: 1px solid #fff;
    border-right: 2px solid #777;
    border-bottom: 2px solid #777;
    background: #f0f0f0;
    color: #8a5a20;
    font-weight: bold;
  }

  .form-buttons {
    grid-column: 2;
    display: flex;
    justify-content: space-between;
    margin-top: 14px;
  }

  .form-buttons .pill {
    width: 105px;
  }
</style>
